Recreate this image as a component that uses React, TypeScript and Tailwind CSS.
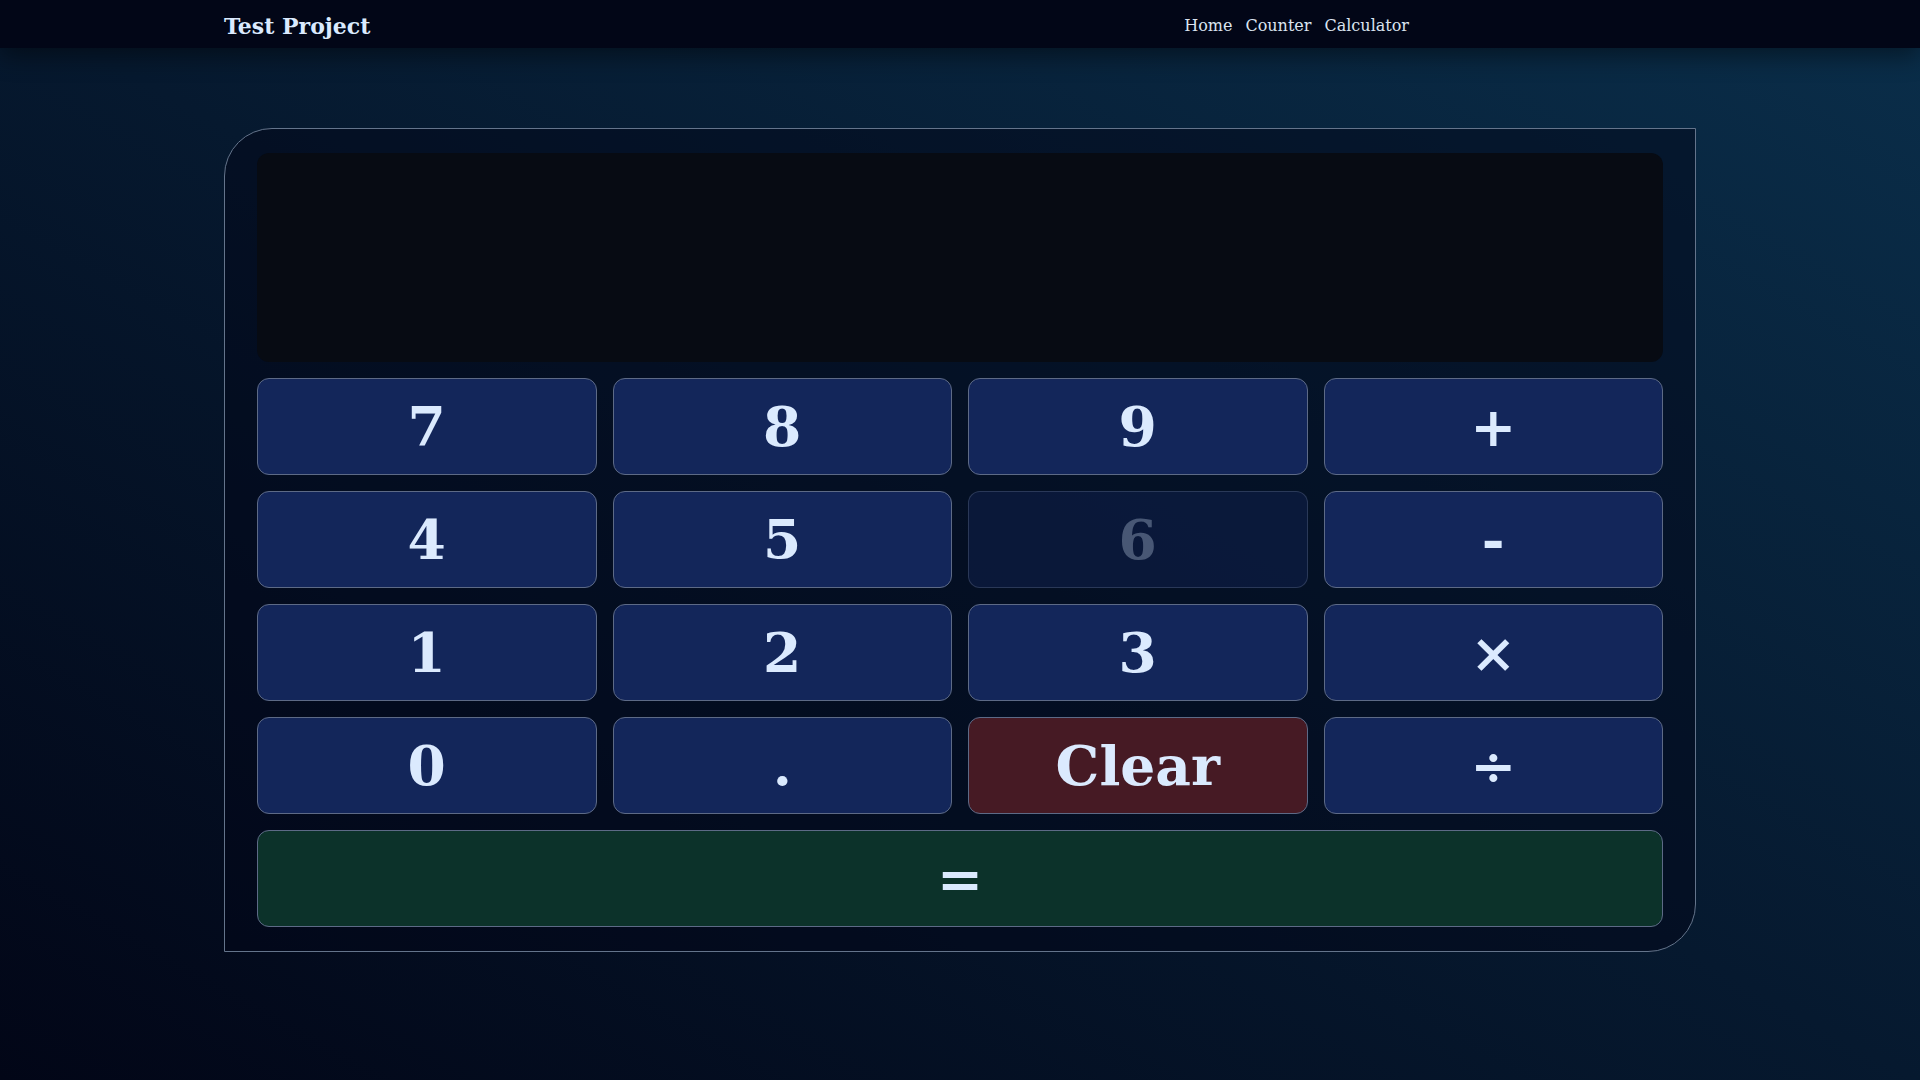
import React from "react";

type Key = { label: string; kind?: "num" | "op" | "clear" | "disabled" };

const keys: Key[] = [
  { label: "7" },
  { label: "8" },
  { label: "9" },
  { label: "+" },
  { label: "4" },
  { label: "5" },
  { label: "6", kind: "disabled" },
  { label: "-" },
  { label: "1" },
  { label: "2" },
  { label: "3" },
  { label: "×" },
  { label: "0" },
  { label: "." },
  { label: "Clear", kind: "clear" },
  { label: "÷" },
];

function KeyButton({ k }: { k: Key }) {
  if (k.kind === "clear") {
    return (
      <button className="h-[97px] rounded-xl border border-[#5d6a86] bg-[#461a24] text-[55px] leading-none font-bold text-[#dbeafe] flex items-center justify-center">
        {k.label}
      </button>
    );
  }
  if (k.kind === "disabled") {
    return (
      <button className="h-[97px] rounded-xl border border-[#5d6a86]/40 bg-[#13265a]/40 text-[55px] leading-none font-bold text-[#dbeafe]/30 flex items-center justify-center">
        {k.label}
      </button>
    );
  }
  return (
    <button className="h-[97px] rounded-xl border border-[#5d6a86] bg-[#13265a] text-[55px] leading-none font-bold text-[#dbeafe] flex items-center justify-center">
      {k.label}
    </button>
  );
}

export default function App() {
  return (
    <div className="min-h-screen w-full bg-[linear-gradient(to_top_right,#020617_0%,#06192f_50%,#0a2e4a_100%)] font-['DejaVu_Serif',serif] text-[#dbeafe]">
      <header className="relative z-10 h-12 bg-[#020617] shadow-[0_8px_24px_rgba(0,0,0,0.45)] flex items-center pl-[224px] pt-[4px]">
        <span className="text-[22px] font-bold text-[#dbeafe] leading-none">Test Project</span>
        <nav className="ml-auto mr-[511px] flex gap-[13px] text-[16px] text-[#dbe4f0]">
          <a>Home</a>
          <a>Counter</a>
          <a>Calculator</a>
        </nav>
      </header>
      <main className="px-[224px] pt-[80px] pb-[128px]">
        <div className="border border-[#64748b] rounded-tl-[48px] rounded-br-[48px] bg-[#020617]/50 px-8 py-6 flex flex-col gap-4">
          <div className="h-[209px] rounded-xl bg-[#070b13]" />
          <div className="grid grid-cols-4 gap-4">
            {keys.map((k) => (
              <KeyButton key={k.label} k={k} />
            ))}
          </div>
          <button className="h-[97px] rounded-xl border border-[#5d6a86] bg-[#0c322a] text-[55px] leading-none font-bold text-[#dbeafe] flex items-center justify-center">
            =
          </button>
        </div>
      </main>
    </div>
  );
}
